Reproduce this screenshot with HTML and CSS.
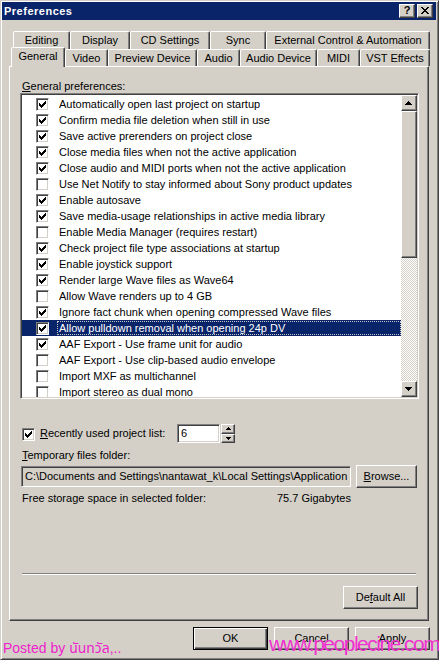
FILE: index.html
```html
<!DOCTYPE html>
<html>
<head>
<meta charset="utf-8">
<link rel="stylesheet" href="styles.css">
</head>
<body>
<svg class="defs" width="0" height="0">
  <defs>
    <path id="chk" d="M6 0h1v1h-1z M5 1h2v1h-2z M0 2h1v1h-1z M4 2h3v1h-3z M0 3h2v1h-2z M3 3h3v1h-3z M0 4h5v1h-5z M1 5h3v1h-3z M2 6h1v1h-1z"/>
    <path id="up" d="M3 0h1v1h-1z M2 1h3v1h-3z M1 2h5v1h-5z M0 3h7v1h-7z"/>
    <path id="down" d="M0 0h7v1h-7z M1 1h5v1h-5z M2 2h3v1h-3z M3 3h1v1h-1z"/>
    <path id="sup" d="M2 0h1v1h-1z M1 1h3v1h-3z M0 2h5v1h-5z"/>
    <path id="sdown" d="M0 0h5v1h-5z M1 1h3v1h-3z M2 2h1v1h-1z"/>
    <path id="x" d="M0 0h2v1h-2z M6 0h2v1h-2z M1 1h2v1h-2z M5 1h2v1h-2z M2 2h4v1h-4z M3 3h2v1h-2z M2 4h4v1h-4z M1 5h2v1h-2z M5 5h2v1h-2z M0 6h2v1h-2z M6 6h2v1h-2z"/>
  </defs>
</svg>
<div class="window">
  <div class="titlebar">
    <span class="title">Preferences</span>
    <span class="cbtn raised"><span class="qmark">?</span></span>
    <span class="cbtn raised close"><svg width="8" height="7" viewBox="0 0 8 7"><use href="#x"/></svg></span>
  </div>

  <div class="tabs">
    <div class="tabrow back">
      <div class="tab w-editing">Editing</div>
      <div class="tab w-display">Display</div>
      <div class="tab w-cd">CD Settings</div>
      <div class="tab w-sync">Sync</div>
      <div class="tab w-ext">External Control &amp; Automation</div>
    </div>
    <div class="tabrow front">
      <div class="tab selected w-general">General</div>
      <div class="tab w-video">Video</div>
      <div class="tab w-preview">Preview Device</div>
      <div class="tab w-audio">Audio</div>
      <div class="tab w-adev">Audio Device</div>
      <div class="tab w-midi">MIDI</div>
      <div class="tab w-vst">VST Effects</div>
    </div>
  </div>

  <div class="panel">
    <div class="label"><u>G</u>eneral preferences:</div>
    <div class="listbox sunken">
      <div class="items">
        <div class="row"><span class="cb sunken-cb"><svg width="7" height="7" viewBox="0 0 7 7"><use href="#chk"/></svg></span><span class="txt">Automatically open last project on startup</span></div>
        <div class="row"><span class="cb sunken-cb"><svg width="7" height="7" viewBox="0 0 7 7"><use href="#chk"/></svg></span><span class="txt">Confirm media file deletion when still in use</span></div>
        <div class="row"><span class="cb sunken-cb"><svg width="7" height="7" viewBox="0 0 7 7"><use href="#chk"/></svg></span><span class="txt">Save active prerenders on project close</span></div>
        <div class="row"><span class="cb sunken-cb"><svg width="7" height="7" viewBox="0 0 7 7"><use href="#chk"/></svg></span><span class="txt">Close media files when not the active application</span></div>
        <div class="row"><span class="cb sunken-cb"><svg width="7" height="7" viewBox="0 0 7 7"><use href="#chk"/></svg></span><span class="txt">Close audio and MIDI ports when not the active application</span></div>
        <div class="row"><span class="cb sunken-cb"></span><span class="txt">Use Net Notify to stay informed about Sony product updates</span></div>
        <div class="row"><span class="cb sunken-cb"><svg width="7" height="7" viewBox="0 0 7 7"><use href="#chk"/></svg></span><span class="txt">Enable autosave</span></div>
        <div class="row"><span class="cb sunken-cb"><svg width="7" height="7" viewBox="0 0 7 7"><use href="#chk"/></svg></span><span class="txt">Save media-usage relationships in active media library</span></div>
        <div class="row"><span class="cb sunken-cb"></span><span class="txt">Enable Media Manager (requires restart)</span></div>
        <div class="row"><span class="cb sunken-cb"><svg width="7" height="7" viewBox="0 0 7 7"><use href="#chk"/></svg></span><span class="txt">Check project file type associations at startup</span></div>
        <div class="row"><span class="cb sunken-cb"><svg width="7" height="7" viewBox="0 0 7 7"><use href="#chk"/></svg></span><span class="txt">Enable joystick support</span></div>
        <div class="row"><span class="cb sunken-cb"><svg width="7" height="7" viewBox="0 0 7 7"><use href="#chk"/></svg></span><span class="txt">Render large Wave files as Wave64</span></div>
        <div class="row"><span class="cb sunken-cb"></span><span class="txt">Allow Wave renders up to 4 GB</span></div>
        <div class="row"><span class="cb sunken-cb"><svg width="7" height="7" viewBox="0 0 7 7"><use href="#chk"/></svg></span><span class="txt">Ignore fact chunk when opening compressed Wave files</span></div>
        <div class="row sel"><span class="cb sunken-cb"><svg width="7" height="7" viewBox="0 0 7 7"><use href="#chk"/></svg></span><span class="txt">Allow pulldown removal when opening 24p DV</span></div>
        <div class="row"><span class="cb sunken-cb"><svg width="7" height="7" viewBox="0 0 7 7"><use href="#chk"/></svg></span><span class="txt">AAF Export - Use frame unit for audio</span></div>
        <div class="row"><span class="cb sunken-cb"></span><span class="txt">AAF Export - Use clip-based audio envelope</span></div>
        <div class="row"><span class="cb sunken-cb"></span><span class="txt">Import MXF as multichannel</span></div>
        <div class="row"><span class="cb sunken-cb"></span><span class="txt">Import stereo as dual mono</span></div>
      </div>
      <div class="scrollbar">
        <div class="sbtn raised"><svg width="7" height="4" viewBox="0 0 7 4"><use href="#up"/></svg></div>
        <div class="thumb raised"></div>
        <div class="track"></div>
        <div class="sbtn raised"><svg width="7" height="4" viewBox="0 0 7 4"><use href="#down"/></svg></div>
      </div>
    </div>

    <div class="recent">
      <span class="cb sunken-cb"><svg width="7" height="7" viewBox="0 0 7 7"><use href="#chk"/></svg></span>
      <span class="recent-label"><u>R</u>ecently used project list:</span>
      <span class="spin-input sunken">6</span>
      <span class="spin">
        <span class="spinbtn raised"><svg width="5" height="3" viewBox="0 0 5 3"><use href="#sup"/></svg></span>
        <span class="spinbtn raised"><svg width="5" height="3" viewBox="0 0 5 3"><use href="#sdown"/></svg></span>
      </span>
    </div>

    <div class="label temp"><u>T</u>emporary files folder:</div>
    <div class="folder-row">
      <div class="field sunken">C:\Documents and Settings\nantawat_k\Local Settings\Application</div>
      <div class="btn raised browse"><u>B</u>rowse...</div>
    </div>
    <div class="free-row">
      <span>Free storage space in selected folder:</span>
      <span>75.7 Gigabytes</span>
    </div>
    <div class="separator"></div>
    <div class="btn raised default-all">De<u>f</u>ault All</div>
  </div>

  <div class="buttons">
    <div class="btn raised default">OK</div>
    <div class="btn raised">Cancel</div>
    <div class="btn raised">Apply</div>
  </div>

  <div class="wm-posted">Posted by นันทวัล,..</div>
  <div class="wm-site">www.peoplecine.com</div>
</div>
</body>
</html>
```

FILE: styles.css
```css
* { box-sizing: border-box; }
html, body { margin: 0; padding: 0; }
body {
  width: 439px;
  height: 660px;
  overflow: hidden;
  background: #d4d0c8;
  font-family: "Liberation Sans", Arial, sans-serif;
  font-size: 11px;
  line-height: 13px;
  color: #000;
}
.defs { position: absolute; width: 0; height: 0; }
svg { display: block; fill: #000; shape-rendering: crispEdges; }

.window {
  position: relative;
  width: 439px;
  height: 660px;
  background: #d4d0c8;
  border: 1px solid;
  border-color: #d4d0c8 #404040 #404040 #d4d0c8;
  box-shadow: inset 1px 1px #fff, inset -1px -1px #808080;
  padding: 1px 2px 2px 1px;
  display: flex;
  flex-direction: column;
}

.raised {
  background: #d4d0c8;
  border: 1px solid;
  border-color: #fff #404040 #404040 #fff;
  box-shadow: inset -1px -1px #808080;
}
.sunken {
  border: 1px solid;
  border-color: #808080 #fff #fff #808080;
  box-shadow: inset 1px 1px #404040, inset -1px -1px #d4d0c8;
}

/* title bar */
.titlebar {
  height: 18px;
  flex: none;
  background: #0a246a;
  display: flex;
  align-items: center;
  padding: 0 3px 0 2px;
}
.title {
  flex: 1;
  color: #fff;
  font-weight: bold;
  font-size: 11px;
  letter-spacing: 0.5px;
}
.cbtn {
  width: 16px;
  height: 14px;
  display: flex;
  align-items: center;
  justify-content: center;
}
.cbtn.close { margin-left: 2px; padding: 0 1px 1px 0; }
.qmark { font-weight: bold; font-size: 11px; line-height: 11px; margin-top: -1px; }

/* tabs */
.tabs {
  margin: 11px 0 0 9px;
  position: relative;
  z-index: 2;
  flex: none;
}
.tabrow { display: flex; }
.tabrow.back { height: 18px; padding-left: 2px; }
.tabrow.front { height: 17px; }
.tab {
  flex: none;
  height: 18px;
  background: #d4d0c8;
  border: 1px solid;
  border-bottom: none;
  border-color: #fff #404040 transparent #fff;
  box-shadow: inset -1px 0 #808080;
  border-radius: 2px 2px 0 0;
  padding-top: 2px;
  text-align: center;
  white-space: nowrap;
}
.tabrow.front .tab { height: 17px; }
.tab.selected {
  height: 20px;
  margin-top: -2px;
  position: relative;
  z-index: 3;
  padding-top: 2px;
}
.w-editing { width: 57px; }
.w-display { width: 60px; }
.w-cd { width: 80px; }
.w-sync { width: 56px; }
.w-ext { width: 164px; }
.tabrow.front .w-general { width: 54px; height: 20px; }
.w-video { width: 43px; }
.w-preview { width: 89px; }
.w-audio { width: 43px; }
.w-adev { width: 77px; }
.w-midi { width: 43px; }
.w-vst { width: 70px; }

/* panel */
.panel {
  flex: none;
  margin-left: 7px;
  width: 420px;
  height: 555px;
  border: 1px solid;
  border-color: #fff #404040 #404040 #fff;
  box-shadow: inset -1px -1px #808080;
  padding: 13px 10px 0 12px;
  display: flex;
  flex-direction: column;
}
.label { height: 13px; white-space: nowrap; }

.listbox {
  margin-left: -2px;
  width: 399px;
  height: 306px;
  background: #fff;
  display: flex;
  padding: 1px 1px 1px 1px;
  overflow: hidden;
  flex: none;
}
.items {
  flex: 1;
  overflow: hidden;
  padding-top: 1px;
}
.row {
  height: 16px;
  display: flex;
  align-items: center;
  padding-left: 14px;
  white-space: nowrap;
}
.row.sel { background: #0a246a; color: #fff; }
.cb {
  width: 13px;
  height: 13px;
  flex: none;
  background: #fff;
  padding: 2px;
}
.sunken-cb {
  border: 1px solid;
  border-color: #808080 #fff #fff #808080;
  box-shadow: inset 1px 1px #404040, inset -1px -1px #d4d0c8;
}
.row .txt {
  margin-left: 8px;
  padding: 0 1px;
  height: 14px;
  line-height: 13px;
  border: 1px solid transparent;
}
.row.sel .txt {
  flex: 1;
  border: 1px dotted #c8c8c8;
  line-height: 12px;
}

.scrollbar {
  width: 16px;
  flex: none;
  display: flex;
  flex-direction: column;
}
.sbtn {
  height: 16px;
  flex: none;
  display: flex;
  align-items: center;
  justify-content: center;
  padding: 0 1px 1px 0;
}
.thumb { height: 147px; flex: none; }
.track {
  flex: 1;
  background-color: #fff;
  background-image: conic-gradient(#d4d0c8 25%, #fff 0 50%, #d4d0c8 0 75%, #fff 0);
  background-size: 2px 2px;
}

/* recent */
.recent {
  margin-top: 25px;
  height: 19px;
  display: flex;
  align-items: center;
}
.recent .cb { margin-top: 1px; }
.recent-label { width: 137px; margin-left: 5px; flex: none; white-space: nowrap; }
.spin-input {
  width: 43px;
  height: 19px;
  background: #fff;
  padding: 2px 3px;
  flex: none;
}
.spin {
  margin-left: 1px;
  width: 14px;
  height: 19px;
  display: flex;
  flex-direction: column;
}
.spinbtn {
  flex: 1;
  display: flex;
  align-items: center;
  justify-content: center;
}

.label.temp { margin-top: 6px; }
.folder-row {
  margin-top: 3px;
  height: 23px;
  display: flex;
  align-items: center;
}
.field {
  margin-left: -1px;
  width: 330px;
  height: 21px;
  background: #d4d0c8;
  padding: 3px 3px;
  white-space: nowrap;
  overflow: hidden;
}
.btn {
  width: 75px;
  height: 23px;
  display: flex;
  align-items: center;
  justify-content: center;
  flex: none;
  white-space: nowrap;
}
.browse { width: 61px; margin-left: 5px; }
.free-row {
  margin-top: 4px;
  width: 329px;
  display: flex;
  justify-content: space-between;
  white-space: nowrap;
}
.separator {
  margin-top: 68px;
  width: 394px;
  height: 2px;
  border-top: 1px solid #808080;
  border-bottom: 1px solid #fff;
  flex: none;
}
.default-all { margin-top: 11px; align-self: flex-end; }

.buttons {
  margin-top: 6px;
  padding-right: 6px;
  display: flex;
  justify-content: flex-end;
  gap: 6px;
}
.btn.default {
  border: 1px solid #000;
  box-shadow: inset 1px 1px #fff, inset -1px -1px #404040, inset -2px -2px #808080;
}

/* watermark overlays */
.wm-posted {
  position: absolute;
  left: 2px;
  top: 639px;
  font-family: "Liberation Sans", "Noto Sans", "Noto Sans Thai", "DejaVu Sans", sans-serif;
  font-size: 14px;
  line-height: 16px;
  color: #ee22cc;
  white-space: nowrap;
}
.wm-site {
  position: absolute;
  left: 268px;
  top: 631px;
  font-family: "Liberation Sans", Arial, sans-serif;
  font-size: 21px;
  line-height: 24px;
  letter-spacing: -1.5px;
  color: #f030d0;
  white-space: nowrap;
}
```
